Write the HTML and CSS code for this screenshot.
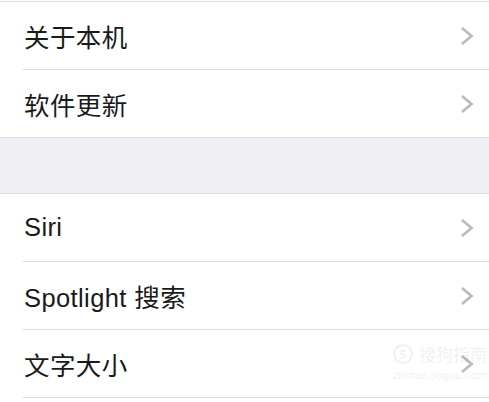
FILE: index.html
```html
<!DOCTYPE html>
<html>
  <head>
    <title>设置</title>
    <meta charset="UTF-8" />
    <link rel="stylesheet" href="styles.css">
  </head>
  <body>
    <div class="group first">
      <div class="row"><span class="label">关于本机</span><svg class="chev" width="14" height="20" viewBox="0 0 14 20"><polyline points="2,2 11.5,10 2,18" /></svg></div>
      <div class="row"><span class="label">软件更新</span><svg class="chev" width="14" height="20" viewBox="0 0 14 20"><polyline points="2,2 11.5,10 2,18" /></svg></div>
    </div>
    <div class="gap"></div>
    <div class="group">
      <div class="row"><span class="label">Siri</span><svg class="chev" width="14" height="20" viewBox="0 0 14 20"><polyline points="2,2 11.5,10 2,18" /></svg></div>
      <div class="row"><span class="label">Spotlight 搜索</span><svg class="chev" width="14" height="20" viewBox="0 0 14 20"><polyline points="2,2 11.5,10 2,18" /></svg></div>
      <div class="row"><span class="label">文字大小</span><svg class="chev" width="14" height="20" viewBox="0 0 14 20"><polyline points="2,2 11.5,10 2,18" /></svg></div>
    </div>
    <div class="mark">
      <div class="mark-top"><span class="mark-s">S</span>搜狗指南</div>
      <div class="mark-url">zhinan.sogou.com</div>
    </div>
  </body>
</html>
```

FILE: styles.css
```css
body {
  margin: 0;
  background: #fff;
  font-family: "Liberation Sans", "Noto Sans CJK SC", sans-serif;
  color: #1a1a1a;
  position: relative;
}
.group {
  background: #fff;
  padding-left: 23px;
}
.group.first {
  margin-top: 1px;
  border-top: 1px solid #dcdce0;
}
.row {
  display: flex;
  align-items: center;
  justify-content: space-between;
  height: 67px;
  padding-right: 15px;
  border-bottom: 1px solid #dcdce0;
}
.group.first .row:last-child {
  margin-left: -23px;
  padding-left: 23px;
}
.label {
  font-size: 25.5px;
  letter-spacing: 0.4px;
  padding-left: 1px;
  padding-bottom: 1px;
}
.chev {
  fill: none;
  stroke: #bcbcc0;
  stroke-width: 2.8;
}
.gap {
  height: 55px;
  background: #efeff4;
  border-bottom: 1px solid #dcdce0;
}
.mark {
  position: absolute;
  left: 393px;
  top: 344px;
  color: #000;
  opacity: 0.05;
  font-family: "Noto Sans CJK SC", sans-serif;
}
.mark-top {
  display: flex;
  align-items: center;
  gap: 6px;
  font-size: 17px;
  line-height: 18px;
}
.mark-s {
  display: inline-block;
  width: 16px;
  height: 16px;
  border: 2px solid #000;
  border-radius: 50%;
  font-size: 12px;
  line-height: 16px;
  text-align: center;
  font-weight: bold;
}
.mark-url {
  font-size: 11px;
  margin-top: 2px;
}
```
